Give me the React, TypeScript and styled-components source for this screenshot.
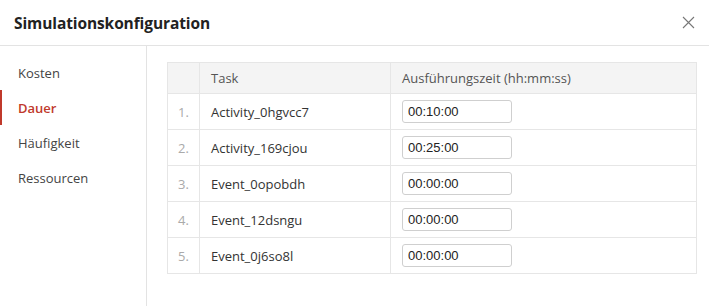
import React, { useState } from 'react';
import styled, { createGlobalStyle } from 'styled-components';

const GlobalStyle = createGlobalStyle`
  html, body {
    margin: 0;
    padding: 0;
    background: #ffffff;
  }
  body {
    font-family: 'Open Sans', 'Noto Sans', sans-serif;
    color: #333333;
  }
`;

const tabs = ['Kosten', 'Dauer', 'Häufigkeit', 'Ressourcen'];

const tasks = [
    { name: 'Activity_0hgvcc7', time: '00:10:00' },
    { name: 'Activity_169cjou', time: '00:25:00' },
    { name: 'Event_0opobdh', time: '00:00:00' },
    { name: 'Event_12dsngu', time: '00:00:00' },
    { name: 'Event_0j6so8l', time: '00:00:00' },
];

function App() {
    const [active, setActive] = useState(1);
    const [times, setTimes] = useState(tasks.map(t => t.time));

    return (
        <>
            <GlobalStyle />
            <Dialog>
                <Header>
                    <Title>Simulationskonfiguration</Title>
                    <CloseButton aria-label="Schließen">
                        <svg width="13" height="13" viewBox="0 0 13 13">
                            <path d="M1 1 L12 12 M12 1 L1 12" stroke="#777" strokeWidth="1.1" fill="none" />
                        </svg>
                    </CloseButton>
                </Header>
                <Body>
                    <Sidebar>
                        {tabs.map((tab, i) => (
                            <MenuItem key={tab} $active={i === active} onClick={() => setActive(i)}>
                                {tab}
                            </MenuItem>
                        ))}
                    </Sidebar>
                    <Content>
                        <Table>
                            <colgroup>
                                <Col $width="32px" />
                                <Col $width="191px" />
                                <Col />
                            </colgroup>
                            <thead>
                                <tr>
                                    <HeadCell />
                                    <HeadCell>Task</HeadCell>
                                    <HeadCell>Ausführungszeit (hh:mm:ss)</HeadCell>
                                </tr>
                            </thead>
                            <tbody>
                                {tasks.map((task, i) => (
                                    <tr key={task.name}>
                                        <NumCell>{i + 1}.</NumCell>
                                        <Cell>{task.name}</Cell>
                                        <Cell>
                                            <TimeInput
                                                value={times[i]}
                                                onChange={e => {
                                                    const next = [...times];
                                                    next[i] = e.target.value;
                                                    setTimes(next);
                                                }}
                                            />
                                        </Cell>
                                    </tr>
                                ))}
                            </tbody>
                        </Table>
                    </Content>
                </Body>
            </Dialog>
        </>
    );
}

export default App;

const Dialog = styled.div`
    width: 709px;
    height: 306px;
    display: flex;
    flex-direction: column;
    background: #fff;
    overflow: hidden;
`;

const Header = styled.div`
    height: 46px;
    box-sizing: border-box;
    display: flex;
    align-items: center;
    justify-content: space-between;
    padding: 0 14px 0 14px;
    border-bottom: 1px solid #e3e3e3;
`;

const Title = styled.h1`
    margin: 0;
    font-size: 15.5px;
    font-weight: 700;
    color: #222;
    letter-spacing: -0.1px;
`;

const CloseButton = styled.button`
    border: none;
    background: none;
    padding: 0;
    width: 13px;
    height: 13px;
    display: flex;
    cursor: pointer;
`;

const Body = styled.div`
    flex: 1;
    display: flex;
`;

const Sidebar = styled.nav`
    width: 147px;
    box-sizing: border-box;
    border-right: 1px solid #e3e3e3;
    padding-top: 9px;
    display: flex;
    flex-direction: column;
`;

const MenuItem = styled.div<{ $active?: boolean }>`
    height: 35px;
    box-sizing: border-box;
    display: flex;
    align-items: center;
    padding-left: 16px;
    font-size: 13px;
    color: ${p => (p.$active ? '#c0392b' : '#444')};
    font-weight: ${p => (p.$active ? 600 : 400)};
    border-left: 2px solid ${p => (p.$active ? '#c0392b' : 'transparent')};
    cursor: pointer;
`;

const Content = styled.div`
    flex: 1;
    padding: 16px 12px 0 20px;
`;

const Table = styled.table`
    width: 530px;
    table-layout: fixed;
    border-collapse: collapse;
    font-size: 13px;
`;

const Col = styled.col<{ $width?: string }>`
    width: ${p => p.$width || 'auto'};
`;

const HeadCell = styled.th`
    height: 30px;
    padding: 0 11px;
    text-align: left;
    font-weight: 400;
    color: #555;
    background: #f4f4f4;
    border: 1px solid #e6e6e6;
    white-space: nowrap;
`;

const Cell = styled.td`
    height: 35px;
    padding: 0 11px;
    color: #333;
    border: 1px solid #e6e6e6;
    white-space: nowrap;
`;

const NumCell = styled(Cell)`
    color: #aaa;
    padding: 0 10px;
`;

const TimeInput = styled.input`
    width: 110px;
    height: 23px;
    box-sizing: border-box;
    border: 1px solid #cfcfcf;
    border-radius: 3px;
    padding: 0 5px;
    font-family: 'Liberation Sans', Arial, sans-serif;
    font-size: 13px;
    color: #222;
    display: block;
    outline: none;
`;
